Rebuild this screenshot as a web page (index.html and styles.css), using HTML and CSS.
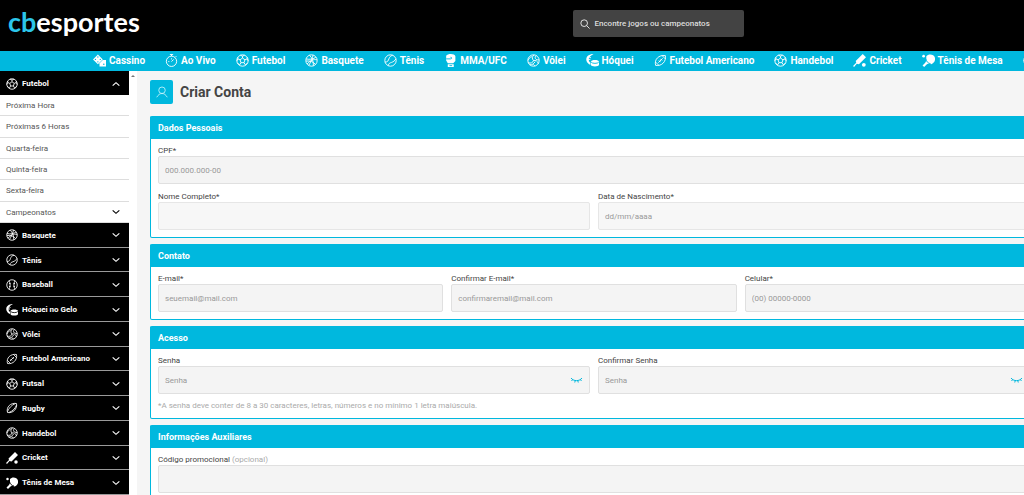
FILE: index.html
```html
<!DOCTYPE html>
<html lang="pt-BR">
<head>
<meta charset="utf-8">
<meta name="viewport" content="width=device-width, initial-scale=1">
<title>cbesportes - Criar Conta</title>
<link rel="stylesheet" href="styles.css">
</head>
<body>
<svg class="sprite" aria-hidden="true">
  <symbol id="soccer" viewBox="0 0 24 24"><circle cx="12" cy="12" r="10.5"/><path d="M12 7.5l4.5 3.2-1.7 5.3H9.200l-1.700-5.300zM12 7.500V4M16.500 10.700l4-1.700M14.800 16l2.400 4M9.200 16l-2.400 4M7.500 10.700L3.500 9M8 2.300L12 4l4-1.700M22.500 13l-2-4 .3-3M17.200 20l4-3M6.800 20l-4-3M1.500 13l2-4-.3-3"/></symbol>
  <symbol id="basket" viewBox="0 0 24 24"><circle cx="12" cy="12" r="10.500"/><path d="M2 9c7 2 14 0 18-3M4 18.500C10 11 16 9 22.300 11M8 2.300c5 4 8 11 7.500 19.500M2 13c8-1 14 2 17.500 6.500M15 2c-1 6-5 14-8 19"/></symbol>
  <symbol id="tennis" viewBox="0 0 24 24"><circle cx="12" cy="12" r="10.500"/><path d="M2 15c5 0 6-3 7-6s3-6 7-6.500M8 21.500c0-4 3-5 6-6s6-3 8-6.500"/></symbol>
  <symbol id="baseball" viewBox="0 0 24 24"><circle cx="12" cy="12" r="10.500"/><path d="M6 3.500c3 5 3 12 0 17M18 3.500c-3 5-3 12 0 17M6 9h3M6 15h3M18 9h-3M18 15h-3"/></symbol>
  <symbol id="hockey" viewBox="0 0 24 24"><path class="fill" d="M14 0C4 0-1 6 1 13c1 3 4 6 7 7v-4c-4-3-4-8 0-12 2-2 4-3 6-4zM9 14c0-4 15-4 15 0v6c0 4-15 4-15 0z"/><path class="cut" d="M9.500 15c1.500 3 12.500 3 14 0"/><path d="M5 5l4 2M3 10h5"/></symbol>
  <symbol id="volley" viewBox="0 0 24 24"><circle cx="12" cy="12" r="10.500"/><path d="M12 12c-3-3-3-7 1-10.500M12 12c4-1 8 1 9 6M12 12c-1 4-5 6-10 4M9 5C5 6 3 9 2 12M17 3c-3 3-2 5 0 7 2 1 4 1 5.500 1M5 20c5 0 8-2 10-6M15 22c-2-1-3-2-3-3"/></symbol>
  <symbol id="football" viewBox="0 0 24 24"><path d="M3 21C0 10 9 1 21 3c2 11-7 20-18 18zM8 16l8-8M9 12l3 3M12 9l3 3M3 15l6 6M15 3l6 6"/></symbol>
  <symbol id="rugby" viewBox="0 0 24 24"><path d="M3 21C0 10 9 1 21 3c2 11-7 20-18 18zM3 19C5 13 11 6 19 3M6 21C14 18 19 12 21 6"/></symbol>
  <symbol id="cricket" viewBox="0 0 24 24"><path class="fill" d="M18 0l6 6L11 19l-4-1-5 6-2-2 6-6-1-3z"/><circle class="fill" cx="20" cy="20" r="3.500"/></symbol>
  <symbol id="pingpong" viewBox="0 0 24 24"><path class="fill" d="M8 4C12-1 22 0 24 7c1 6-2 10-7 12l-6-2-3-6z"/><path class="fill" d="M8 12l5 5-4 2-5 5-3-3 5-5z"/><circle class="fill" cx="3" cy="4" r="2.500"/><path class="cut" d="M7 9c1 5 4 8 9 9"/></symbol>
  <symbol id="dice" viewBox="0 0 24 24"><path class="fill" d="M9 1l9 9-9 9-9-9z"/><path class="fill" d="M18 11h6v12H12v-6z"/><g class="hole"><circle cx="9" cy="5.500" r="1.300"/><circle cx="4.500" cy="10" r="1.300"/><circle cx="13.500" cy="10" r="1.300"/><circle cx="9" cy="14.500" r="1.300"/><circle cx="20" cy="19" r="1.400"/></g></symbol>
  <symbol id="timer" viewBox="0 0 24 24"><circle cx="12" cy="13.500" r="9.500"/><path d="M9 1h6M12 1v3M19 6l2-2M12 14l4-4M12 8v2M6 14h2"/></symbol>
  <symbol id="glove" viewBox="0 0 24 24"><path class="fill" d="M4 3c3-4 16-4 17 1v9l-4 4H7l-3-5zM7 19h11v5H7z"/><path class="cut" d="M4 9h8c3 0 3-3 0-3M10 21.500h5"/></symbol>
  <symbol id="down" viewBox="0 0 24 24"><path d="M2 7l10 9 10-9"/></symbol>
  <symbol id="up" viewBox="0 0 24 24"><path d="M2 17l10-9 10 9"/></symbol>
  <symbol id="search" viewBox="0 0 24 24"><circle cx="10" cy="10" r="8"/><path d="M16 16l7 7"/></symbol>
  <symbol id="user" viewBox="0 0 24 24"><circle cx="12" cy="8.500" r="6.500"/><path d="M1.500 22.500c3-5 6-7.500 10.500-7.500s7.500 2.500 10.500 7.500"/></symbol>
  <symbol id="eye" viewBox="0 0 24 12"><path d="M1 2c5 7 17 7 22 0M4.500 5L2 8M9.500 7l-1 4M14.500 7l1 4M19.500 5L22 8"/></symbol>
</svg>

<header class="top">
  <a class="logo" href="#"><span class="logo-cb">cb</span>esportes</a>
  <label class="search">
    <svg class="icon"><use href="#search"/></svg>
    <input type="search" placeholder="Encontre jogos ou campeonatos" aria-label="Encontre jogos ou campeonatos">
  </label>
</header>

<nav class="sports">
  <a href="#"><svg class="icon"><use href="#dice"/></svg>Cassino</a>
  <a href="#"><svg class="icon"><use href="#timer"/></svg>Ao Vivo</a>
  <a href="#"><svg class="icon"><use href="#soccer"/></svg>Futebol</a>
  <a href="#"><svg class="icon"><use href="#basket"/></svg>Basquete</a>
  <a href="#"><svg class="icon"><use href="#tennis"/></svg>Tênis</a>
  <a href="#"><svg class="icon"><use href="#glove"/></svg>MMA/UFC</a>
  <a href="#"><svg class="icon"><use href="#volley"/></svg>Vôlei</a>
  <a href="#"><svg class="icon"><use href="#hockey"/></svg>Hóquei</a>
  <a href="#"><svg class="icon"><use href="#football"/></svg>Futebol Americano</a>
  <a href="#"><svg class="icon"><use href="#soccer"/></svg>Handebol</a>
  <a href="#"><svg class="icon"><use href="#cricket"/></svg>Cricket</a>
  <a href="#"><svg class="icon"><use href="#pingpong"/></svg>Tênis de Mesa</a>
  <a href="#" aria-label="Futsal"><svg class="icon"><use href="#soccer"/></svg></a>
</nav>

<div class="page">
  <aside class="side">
    <button class="group open"><svg class="icon"><use href="#soccer"/></svg><span>Futebol</span><svg class="chev"><use href="#up"/></svg></button>
    <div class="sub">
      <a href="#">Próxima Hora</a>
      <a href="#">Próximas 6 Horas</a>
      <a href="#">Quarta-feira</a>
      <a href="#">Quinta-feira</a>
      <a href="#">Sexta-feira</a>
      <button>Campeonatos<svg class="chev"><use href="#down"/></svg></button>
    </div>
    <div class="groups">
      <button class="group"><svg class="icon"><use href="#basket"/></svg><span>Basquete</span><svg class="chev"><use href="#down"/></svg></button>
      <button class="group"><svg class="icon"><use href="#tennis"/></svg><span>Tênis</span><svg class="chev"><use href="#down"/></svg></button>
      <button class="group"><svg class="icon"><use href="#baseball"/></svg><span>Baseball</span><svg class="chev"><use href="#down"/></svg></button>
      <button class="group"><svg class="icon"><use href="#hockey"/></svg><span>Hóquei no Gelo</span><svg class="chev"><use href="#down"/></svg></button>
      <button class="group"><svg class="icon"><use href="#volley"/></svg><span>Vôlei</span><svg class="chev"><use href="#down"/></svg></button>
      <button class="group"><svg class="icon"><use href="#football"/></svg><span>Futebol Americano</span><svg class="chev"><use href="#down"/></svg></button>
      <button class="group"><svg class="icon"><use href="#soccer"/></svg><span>Futsal</span><svg class="chev"><use href="#down"/></svg></button>
      <button class="group"><svg class="icon"><use href="#rugby"/></svg><span>Rugby</span><svg class="chev"><use href="#down"/></svg></button>
      <button class="group"><svg class="icon"><use href="#volley"/></svg><span>Handebol</span><svg class="chev"><use href="#down"/></svg></button>
      <button class="group"><svg class="icon"><use href="#cricket"/></svg><span>Cricket</span><svg class="chev"><use href="#down"/></svg></button>
      <button class="group"><svg class="icon"><use href="#pingpong"/></svg><span>Tênis de Mesa</span><svg class="chev"><use href="#down"/></svg></button>
    </div>
  </aside>
  <div class="track"><span class="arrow"></span></div>

  <main class="main">
    <form class="form">
      <div class="title"><span class="badge"><svg class="icon"><use href="#user"/></svg></span><h1>Criar Conta</h1></div>

      <section class="panel">
        <h2>Dados Pessoais</h2>
        <div class="fields two">
          <div class="field full"><label for="cpf">CPF*</label><input id="cpf" type="text" placeholder="000.000.000-00"></div>
          <div class="field"><label for="nome">Nome Completo*</label><input id="nome" class="pale" type="text"></div>
          <div class="field"><label for="nasc">Data de Nascimento*</label><input id="nasc" class="pale" type="text" placeholder="dd/mm/aaaa"></div>
        </div>
      </section>

      <section class="panel">
        <h2>Contato</h2>
        <div class="fields three">
          <div class="field"><label for="email">E-mail*</label><input id="email" type="email" placeholder="seuemail@mail.com"></div>
          <div class="field"><label for="email2">Confirmar E-mail*</label><input id="email2" type="email" placeholder="confirmaremail@mail.com"></div>
          <div class="field"><label for="cel">Celular*</label><input id="cel" type="tel" placeholder="(00) 00000-0000"></div>
        </div>
      </section>

      <section class="panel">
        <h2>Acesso</h2>
        <div class="fields two">
          <div class="field"><label for="senha">Senha</label>
            <div class="secret"><input id="senha" type="password" placeholder="Senha"><button type="button" aria-label="Mostrar senha"><svg><use href="#eye"/></svg></button></div></div>
          <div class="field"><label for="senha2">Confirmar Senha</label>
            <div class="secret"><input id="senha2" type="password" placeholder="Senha"><button type="button" aria-label="Mostrar senha"><svg><use href="#eye"/></svg></button></div></div>
          <p class="hint full">*A senha deve conter de 8 a 30 caracteres, letras, números e no mínimo 1 letra maiúscula.</p>
        </div>
      </section>

      <section class="panel">
        <h2>Informações Auxiliares</h2>
        <div class="fields two">
          <div class="field full"><label for="promo">Código promocional <span class="opt">(opcional)</span></label><input id="promo" type="text"></div>
        </div>
      </section>
    </form>
  </main>
</div>
</body>
</html>
```
FILE: styles.css
```css
:root {
  --brand: #00b8de;
  --ink: #444;
}
* { box-sizing: border-box; }
body {
  margin: 0;
  height: 100vh;
  display: flex;
  flex-direction: column;
  overflow: hidden;
  background: #f5f5f5;
  color: var(--ink);
  font-family: Roboto, "Liberation Sans", sans-serif;
  font-size: 8px;
}
button, input { font: inherit; margin: 0; border: 0; }
a { color: inherit; text-decoration: none; }
svg { fill: none; stroke: currentColor; stroke-width: 2; flex: none; display: block; }
.sprite { width: 0; height: 0; position: absolute; }
.fill { fill: currentColor; stroke: none; }
.cut { stroke: var(--cut, #000); }
.hole { fill: var(--cut, #000); stroke: none; }
.icon { width: 12px; height: 12px; stroke-width: 1.7; }
.chev { width: 8px; height: 8px; stroke-width: 3.5; }

.top {
  flex: none;
  height: 51px;
  display: grid;
  grid-template-columns: 56% 171px;
  align-items: start;
  background: #000;
}
.logo {
  padding-left: 8px;
  color: #fff;
  font: 700 27px/44px Lato, sans-serif;
}
.logo-cb { color: #2cc6ea; }
.search {
  display: flex;
  align-items: center;
  gap: 4px;
  height: 27px;
  margin-top: 10px;
  padding: 0 7px;
  border-radius: 2px;
  background: #434343;
  color: #fff;
}
.search .icon { width: 10px; height: 10px; stroke-width: 2; }
.search input { flex: 1; min-width: 0; padding: 0; background: none; color: #fff; outline: 0; }
.search input::placeholder { color: #ddd; font-weight: 500; opacity: 1; }

.sports {
  --cut: var(--brand);
  flex: none;
  height: 20px;
  display: flex;
  align-items: center;
  gap: 20px;
  padding: 0 0 1px 93px;
  overflow: hidden;
  background: var(--brand);
  color: #fff;
  font-size: 10px;
  font-weight: 700;
  white-space: nowrap;
}
.sports a { display: flex; align-items: center; gap: 3px; }
.sports .icon { width: 13px; height: 13px; }

.page { flex: 1; min-height: 0; display: flex; }
.side { flex: none; width: 129px; display: flex; flex-direction: column; background: #000; }
.group {
  display: flex;
  align-items: center;
  gap: 4px;
  width: 100%;
  padding: 1px 9px 0 6px;
  border-bottom: 1px solid #9a9a9a;
  background: #000;
  color: #fff;
  font-weight: 700;
  text-align: left;
}
.group span { flex: 1; white-space: nowrap; }
.open { flex: none; height: 24px; border-bottom: 0; }
.sub { flex: none; height: 128px; display: grid; grid-auto-rows: 1fr; background: #fff; }
.sub > * {
  display: flex;
  align-items: center;
  justify-content: space-between;
  padding: 1px 9px 0 6px;
  border-bottom: 1px solid #ddd;
  background: #fff;
  color: #555;
}
.sub .chev { color: #000; }
.groups { flex: 1; min-height: 0; display: grid; grid-auto-rows: 1fr; }

.track { flex: none; width: 8px; padding: 4px 2px; background: #fff; }
.arrow { display: block; border: 2px solid transparent; border-top: 0; border-bottom-color: #777; }

/* The form is wider than the visible area and is clipped at the right edge. */
.main { flex: 1; min-width: 0; padding: 9px 0 0 13px; overflow: hidden; }
.form { width: calc(100% + 14px); display: flex; flex-direction: column; gap: 6px; }
.title { display: flex; align-items: center; gap: 7px; height: 24px; margin-bottom: 6px; }
.badge {
  display: grid;
  place-items: center;
  width: 23px;
  height: 24px;
  border-radius: 2px;
  background: var(--brand);
  color: #c9f3fb;
}
h1 { margin: 0; font-size: 14px; font-weight: 700; }

.panel { border: 1px solid var(--brand); border-top: 0; border-radius: 2px; background: #fff; }
h2 {
  margin: 0 -1px;
  padding: 1px 0 0 8px;
  border-radius: 2px 2px 0 0;
  background: var(--brand);
  color: #fff;
  font-size: 9px;
  line-height: 22px;
  font-weight: 700;
}
.fields { display: grid; gap: 7px 8px; padding: 6px 7px 7px; }
.two { grid-template-columns: 1fr 1fr; }
.three { grid-template-columns: 1fr 1fr 1fr; }
.full { grid-column: 1 / -1; }
.field { min-width: 0; }
.field label { display: block; line-height: 11px; }
.field input {
  display: block;
  width: 100%;
  height: 28px;
  padding: 0 6px;
  border: 1px solid #e0e0e0;
  border-radius: 2px;
  background: #f4f4f4;
  color: var(--ink);
}
.field input.pale { border-color: #e6e6e6; background: #f7f7f7; }
.field input::placeholder { color: #999; opacity: 1; }
.secret { position: relative; }
.secret button {
  position: absolute;
  top: 0;
  bottom: 0;
  right: 7px;
  padding: 0;
  background: none;
  color: var(--brand);
}
.secret svg { width: 13px; height: 6px; }
.hint { margin: 0; line-height: 10px; color: #aaa; }
.opt { color: #aaa; }
```
